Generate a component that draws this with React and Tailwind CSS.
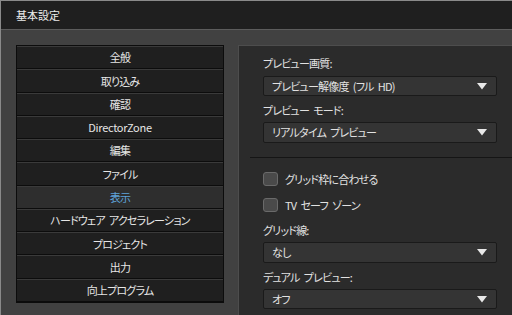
import React from "react";

const items = [
  "全般",
  "取り込み",
  "確認",
  "DirectorZone",
  "編集",
  "ファイル",
  "表示",
  "ハードウェア アクセラレーション",
  "プロジェクト",
  "出力",
  "向上プログラム",
];

function Dropdown({ text, className = "" }) {
  return (
    <div
      className={
        "w-[234px] flex items-center justify-between bg-[#343434] border border-[#1a1a1a] rounded-[2px] pl-[8px] pr-[9px] text-[11px] text-[#e2e2e2] " +
        className
      }
    >
      <span className="leading-none">{text}</span>
      <svg width="10" height="7" viewBox="0 0 10 7">
        <polygon points="0,0 10,0 5,6.5" fill="#e8e8e8" />
      </svg>
    </div>
  );
}

function Checkbox({ label, className = "" }) {
  return (
    <div className={"flex items-center gap-[7px] " + className}>
      <div className="w-[15px] h-[14px] rounded-[3px] bg-[#4a4a4a] border border-[#6a6a6a]" />
      <span className="text-[11px] text-[#e2e2e2] leading-[16px]">{label}</span>
    </div>
  );
}

export default function App() {
  return (
    <div
      className="w-[512px] h-[315px] overflow-hidden flex flex-col bg-[#414141] border-l border-t border-[#8a8a8a] [font-feature-settings:'palt'] tracking-[-0.8px] [word-spacing:2.5px]"
      style={{ fontFamily: '"Noto Sans CJK JP", "Noto Sans", sans-serif' }}
    >
      <div className="h-[28px] shrink-0 bg-[#1f1f1f] flex items-center pl-[15px] text-[11px] text-[#ececec] tracking-[0px]">
        基本設定
      </div>
      <div className="h-px shrink-0 bg-[#5c5c5c]" />
      <div className="flex-1 flex pt-[15px] pl-[15px] gap-[14px]">
        <div className="w-[208px] h-[258px] shrink-0 border border-[#0c0c0c] bg-[#0c0c0c] flex flex-col">
          {items.map((t) => {
            const sel = t === "表示";
            const latin = t === "DirectorZone";
            return (
              <div
                key={t}
                className={
                  "flex-1 flex items-center justify-center border-t border-[#3a3a3a] border-b border-b-[#0c0c0c] text-[11px] " +
                  (latin ? "tracking-[-0.3px] " : "") +
                  (sel ? "bg-[#2e2e2e] text-[#5ea3d9]" : "bg-[#1f1f1f] text-[#e6e6e6]")
                }
              >
                {t}
              </div>
            );
          })}
        </div>
        <div className="flex-1 bg-[#2b2b2b] border-l border-t border-[#4d4d4d] flex flex-col">
          <div className="pl-[24px] pt-[9px] flex flex-col">
            <div className="text-[11px] leading-[16px] text-[#e2e2e2]">プレビュー画質:</div>
            <Dropdown text="プレビュー解像度 (フル HD)" className="h-[20px] mt-[5px]" />
            <div className="text-[11px] leading-[16px] text-[#e2e2e2] mt-[6px]">プレビュー モード:</div>
            <Dropdown text="リアルタイム プレビュー" className="h-[21px] mt-[4px]" />
          </div>
          <div className="h-px bg-[#151515] ml-[11px] mt-[14px]" />
          <div className="pl-[24px] flex flex-col">
            <Checkbox label="グリッド枠に合わせる" className="mt-[13px]" />
            <Checkbox label="TV セーフ ゾーン" className="mt-[10px]" />
            <div className="text-[11px] leading-[16px] text-[#e2e2e2] mt-[9px]">グリッド線:</div>
            <Dropdown text="なし" className="h-[21px] mt-[4px]" />
            <div className="text-[11px] leading-[16px] text-[#e2e2e2] mt-[6px]">デュアル プレビュー:</div>
            <Dropdown text="オフ" className="h-[20px] mt-[4px]" />
          </div>
        </div>
      </div>
    </div>
  );
}
